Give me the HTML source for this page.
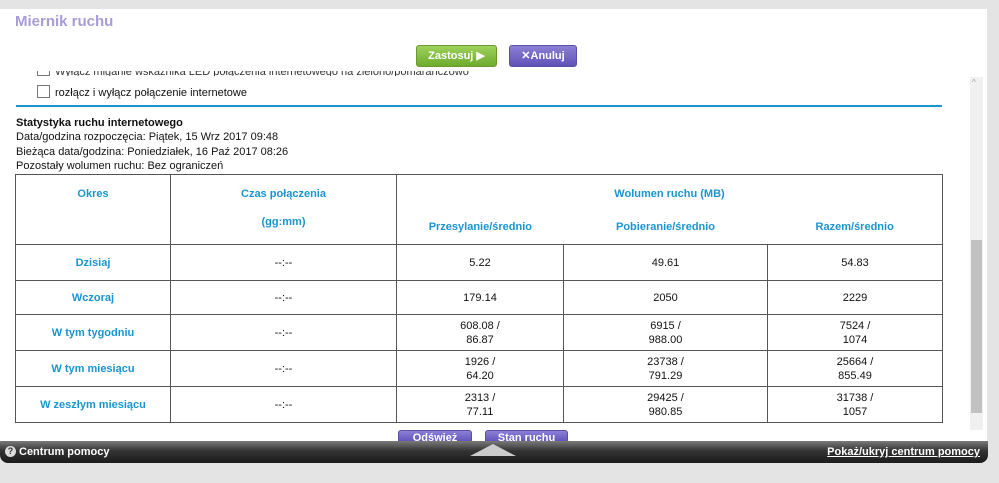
<!DOCTYPE html>
<html><head><meta charset="utf-8"><style>
body{margin:0;width:999px;height:483px;background:#e4e4e4;position:relative;overflow:hidden;font-family:"Liberation Sans",Arial,sans-serif;font-size:11px;color:#111}
.panel{position:absolute;left:0;top:9px;width:987px;height:432px;background:#fff}
.title{position:absolute;left:15px;top:13px;font-size:15px;font-weight:bold;color:#a99cd6}
.btn{position:absolute;height:20px;border-radius:3px;color:#fff;font-weight:bold;font-size:11px;text-align:center;line-height:20px}
.g{background:linear-gradient(#9ed159,#6eab2f);border:1px solid #6a9b32}
.p{background:linear-gradient(#8b7fd6,#5f52b8);border:1px solid #5a4fa6}
.cb{position:absolute;width:11px;height:11px;border:1px solid #777;background:#fff}
.t{position:absolute;white-space:nowrap}
table{position:absolute;left:15px;top:174px;width:927px;border-collapse:collapse;table-layout:fixed}
td{border:1px solid #555;text-align:center;padding:0;font-size:11px;line-height:14px}
.h{color:#1a95cf;font-weight:bold}
.sb{position:absolute;left:970px;top:77px;width:13px;height:353px;background:#f0f0f0}
.thumb{position:absolute;left:971px;top:240px;width:11px;height:173px;background:#c1c1c1}
.bar{position:absolute;left:0;top:441px;width:988px;height:22px;background:linear-gradient(#7a7a7a,#333 45%,#1b1b1b);border-radius:0 0 8px 8px;color:#fff;font-weight:bold;font-size:11px}
</style></head><body>
<div class="panel"></div>
<div class="title">Miernik ruchu</div>
<div class="cb" style="left:37px;top:69px;height:6px;border-top:none"></div>
<div class="t" style="left:55px;top:71px;font-size:11px;color:#333;height:5px;overflow:hidden;line-height:2px">Wyłącz miganie wskaźnika LED połączenia internetowego na zielono/pomarańczowo</div>
<div style="position:absolute;left:0;top:66px;width:970px;height:5px;background:#fff"></div>
<div class="btn g" style="left:416px;top:45px;width:79px">Zastosuj ▶</div>
<div class="btn p" style="left:509px;top:45px;width:66px">✕Anuluj</div>
<div class="cb" style="left:37px;top:85px"></div>
<div class="t" style="left:55px;top:87px">rozłącz i wyłącz połączenie internetowe</div>
<div style="position:absolute;left:16px;top:105px;width:926px;height:2px;background:#1a95cf"></div>
<div class="t" style="left:16px;top:117px;font-weight:bold">Statystyka ruchu internetowego</div>
<div class="t" style="left:16px;top:131px">Data/godzina rozpoczęcia: Piątek, 15 Wrz 2017 09:48</div>
<div class="t" style="left:16px;top:146px">Bieżąca data/godzina: Poniedziałek, 16 Paź 2017 08:26</div>
<div class="t" style="left:16px;top:160px">Pozostały wolumen ruchu: Bez ograniczeń</div>
<table>
<colgroup><col style="width:155px"><col style="width:226px"><col style="width:167px"><col style="width:204px"><col style="width:175px"></colgroup>
<tr style="height:70px"><td class="h" style="vertical-align:top;padding-top:12px">Okres</td>
<td class="h" style="vertical-align:top;padding-top:12px">Czas połączenia<br><br>(gg:mm)</td>
<td colspan="3" class="h" style="border-bottom:1px solid #555;vertical-align:top;padding:0"><div style="padding-top:12px;height:33px">Wolumen ruchu (MB)</div><div style="display:flex"><span style="width:167px">Przesylanie/średnio</span><span style="width:204px">Pobieranie/średnio</span><span style="width:175px">Razem/średnio</span></div></td></tr>
<tr style="height:36px"><td class="h">Dzisiaj</td><td>--:--</td><td>5.22</td><td>49.61</td><td>54.83</td></tr>
<tr style="height:34px"><td class="h">Wczoraj</td><td>--:--</td><td>179.14</td><td>2050</td><td>2229</td></tr>
<tr style="height:36px"><td class="h">W tym tygodniu</td><td>--:--</td><td>608.08 /<br>86.87</td><td>6915 /<br>988.00</td><td>7524 /<br>1074</td></tr>
<tr style="height:36px"><td class="h">W tym miesiącu</td><td>--:--</td><td>1926 /<br>64.20</td><td>23738 /<br>791.29</td><td>25664 /<br>855.49</td></tr>
<tr style="height:36px"><td class="h">W zeszłym miesiącu</td><td>--:--</td><td>2313 /<br>77.11</td><td>29425 /<br>980.85</td><td>31738 /<br>1057</td></tr>
</table>
<div class="btn p" style="left:398px;top:430px;width:72px;height:11px;overflow:hidden;border-radius:3px 3px 0 0;line-height:14px">Odśwież</div>
<div class="btn p" style="left:485px;top:430px;width:81px;height:11px;overflow:hidden;border-radius:3px 3px 0 0;line-height:14px">Stan ruchu</div>
<div class="sb"></div><div class="thumb"></div>
<div class="t" style="left:972px;top:78px;font-size:8px;color:#999">^</div>
<div class="bar">
<span style="position:absolute;left:5px;top:5px;width:11px;height:11px;border-radius:50%;background:#ddd;color:#333;font-size:9px;line-height:11px;text-align:center">?</span>
<span style="position:absolute;left:19px;top:5px">Centrum pomocy</span>
<span style="position:absolute;left:470px;top:3px;width:0;height:0;border-left:23px solid transparent;border-right:23px solid transparent;border-bottom:12px solid #ccc"></span>
<span style="position:absolute;right:8px;top:5px;text-decoration:underline">Pokaż/ukryj centrum pomocy</span>
</div>
</body></html>
